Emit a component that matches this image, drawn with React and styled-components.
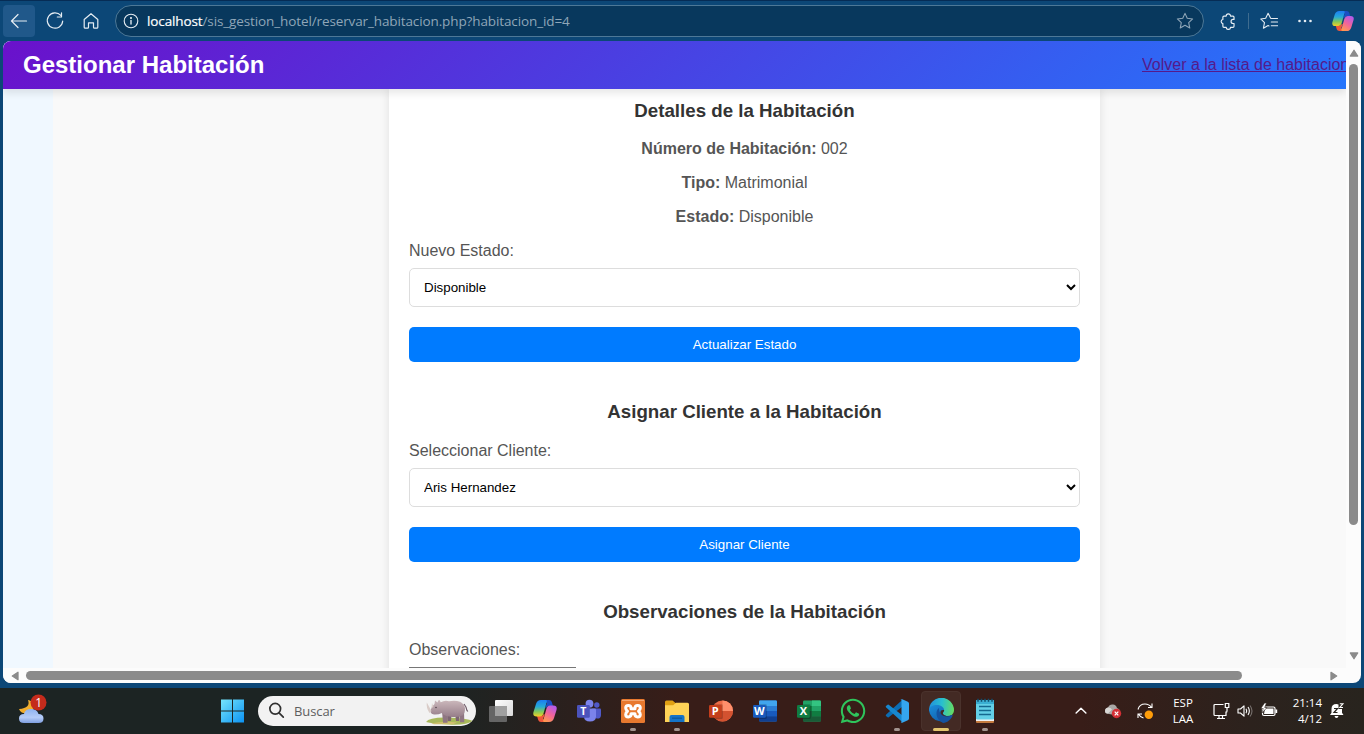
import React from "react";
import styled, { createGlobalStyle } from "styled-components";
import { FaWhatsapp } from "react-icons/fa";

const Global = createGlobalStyle`
  * { box-sizing: border-box; }
  html, body { margin: 0; padding: 0; overflow: hidden; }
  body { font-family: "Liberation Sans", Arial, sans-serif; }
`;

const Screen = styled.div`
  width: 1364px;
  height: 734px;
  display: flex;
  flex-direction: column;
  background: #0c4777;
  overflow: hidden;
`;

/* ---------- browser toolbar ---------- */
const Toolbar = styled.div`
  height: 41px;
  flex: none;
  display: flex;
  align-items: flex-start;
  padding: 4px 0 0 3px;
  border-top: 1px solid #062c55;
  color: #e6edf3;
  svg { display: block; flex: none; }
`;
const ToolButton = styled.div`
  width: ${(p) => p.$w || 32}px;
  height: 32px;
  margin-left: ${(p) => p.$before || 0}px;
  margin-right: ${(p) => p.$gap || 0}px;
  flex: none;
  display: flex;
  align-items: center;
  justify-content: center;
  border-radius: 4px;
  background: ${(p) => (p.$active ? "#20588a" : "transparent")};
`;
const AddressBar = styled.div`
  width: 1089px;
  height: 32px;
  flex: none;
  display: flex;
  align-items: center;
  padding: 0 9px 0 7px;
  border: 1px solid #4d7897;
  border-radius: 16px;
  background: #08385d;
`;
const Url = styled.div`
  flex: 1;
  margin-left: 8px;
  font: 13.5px/18px "Open Sans", "Noto Sans", sans-serif;
  letter-spacing: -0.115px;
  color: #8fa6b8;
  white-space: nowrap;
  b { font-weight: 400; color: #fff; -webkit-text-stroke: 0.2px #fff; }
`;
const Divider = styled.div`
  width: 1px;
  height: 16px;
  margin: 8px 4px 0;
  flex: none;
  background: #3f6c8f;
`;

/* ---------- page viewport ---------- */
const Viewport = styled.div`
  width: 1358px;
  height: 642px;
  flex: none;
  margin-left: 3px;
  display: grid;
  grid-template: 627px 15px / 1343px 15px;
  border-radius: 8px;
  overflow: hidden;
  background: #fcfcfc;
`;
const Page = styled.div`
  display: flex;
  flex-direction: column;
  overflow: hidden;
  background: #f0f8ff;
`;
const Header = styled.header`
  height: 48px;
  flex: none;
  display: flex;
  align-items: center;
  justify-content: space-between;
  padding-left: 20px;
  background: linear-gradient(135deg, #6a11cb, #2575fc);
  box-shadow: 0 4px 8px rgba(0, 0, 0, 0.1);
  z-index: 1;
`;
const Title = styled.h1`
  margin: 0;
  font-size: 24px;
  line-height: 28px;
  color: #fff;
`;
const BackLink = styled.a`
  width: 204px;
  overflow: hidden;
  white-space: nowrap;
  font-size: 16px;
  line-height: 20px;
  color: #551a8b;
  text-decoration: underline;
`;
const Main = styled.main`
  flex: 1;
  min-height: 0;
  margin-left: 50px;
  padding-left: 336px;
  background: #f9f9f9;
`;
const Panel = styled.section`
  width: 711px;
  height: 760px;
  padding: 11px 20px 0;
  background: #fff;
  box-shadow: 0 0 10px rgba(0, 0, 0, 0.1);
`;
const Heading = styled.h3`
  margin: 0 0 ${(p) => p.$gap || 18}px;
  font-size: 18.72px;
  line-height: 22px;
  text-align: center;
  color: #333;
`;
const Fact = styled.p`
  margin: 0 0 16px;
  font-size: 16px;
  line-height: 18px;
  text-align: center;
  color: #555;
`;
const Label = styled.label`
  display: block;
  margin: 0 0 8px;
  font-size: 16px;
  line-height: 18px;
  color: #555;
`;
const Select = styled.select`
  display: block;
  width: 100%;
  height: 39px;
  padding: 10px;
  border: 1px solid #ddd;
  border-radius: 5px;
  background: #fff;
  color: #000;
  font: 13.333px "Liberation Sans", Arial, sans-serif;
`;
const Submit = styled.button`
  display: block;
  width: 100%;
  height: 35px;
  margin: 20px 0 39px;
  padding: 10px;
  border: none;
  border-radius: 5px;
  background: #007bff;
  color: #fff;
  font: 13.333px/15px "Liberation Sans", Arial, sans-serif;
`;
const Notes = styled.textarea`
  display: block;
  width: 167px;
  height: 36px;
  border: 1px solid #767676;
  resize: none;
`;

/* ---------- scrollbars ---------- */
const VBar = styled.div`
  display: flex;
  flex-direction: column;
  align-items: center;
  padding: 7px 0 7px;
  background: #fcfcfc;
`;
const HBar = styled.div`
  display: flex;
  align-items: center;
  padding: 0 7px 0 7px;
  background: #fcfcfc;
`;
const Thumb = styled.div`
  width: ${(p) => p.$w}px;
  height: ${(p) => p.$h}px;
  margin: ${(p) => p.$m};
  flex: none;
  border-radius: 5px;
  background: #8b8b8b;
`;
const Arrow = styled.svg`
  width: 10px;
  height: 10px;
  flex: none;
  transform: rotate(${(p) => p.$turn}deg);
`;

/* ---------- taskbar ---------- */
const Taskbar = styled.div`
  height: 46px;
  flex: none;
  margin-top: 5px;
  display: flex;
  align-items: center;
  padding-bottom: 1px;
  background: linear-gradient(90deg, #1c2423 0, #1c2423 440px, #2b201d 570px, #381d18 680px, #381d18 1080px, #2c221d 1250px, #28241e 100%);
  svg { display: block; flex: none; }
`;
const Weather = styled.div`
  width: 210px;
  padding: 0 0 3px 17px;
`;
const Slot = styled.div`
  position: relative;
  width: 44px;
  height: 44px;
  flex: none;
  display: flex;
  align-items: center;
  justify-content: center;
`;
const ActiveTile = styled.div`
  width: 40px;
  height: 40px;
  display: flex;
  align-items: center;
  justify-content: center;
  border: 1px solid #4a322c;
  border-radius: 4px;
  background: #432a24;
`;
const Running = styled.div`
  position: absolute;
  bottom: 2px;
  left: 50%;
  width: ${(p) => (p.$active ? 16 : 6)}px;
  height: 3px;
  margin-left: ${(p) => (p.$active ? -8 : -3)}px;
  border-radius: 2px;
  background: ${(p) => (p.$active ? "#e3c56f" : "#a3948f")};
`;
const Search = styled.div`
  width: 218px;
  height: 30px;
  flex: none;
  margin: 0 3px 0 4px;
  display: flex;
  align-items: center;
  border-radius: 15px;
  padding: 0 1px 0 10px;
  background: #f2f2f2;
  overflow: hidden;
`;
const SearchText = styled.span`
  flex: 1;
  margin-left: 9px;
  font: 13px/18px "Open Sans", "Noto Sans", sans-serif;
  letter-spacing: -0.1px;
  color: #5e5e5e;
`;
const Tray = styled.div`
  flex: 1;
  display: flex;
  align-items: center;
  padding-left: 67px;
  color: #fff;
`;
const TrayItem = styled.div`
  width: ${(p) => p.$w}px;
  flex: none;
  display: flex;
  justify-content: center;
`;
const TrayText = styled.div`
  width: ${(p) => p.$w}px;
  flex: none;
  padding-top: 1px;
  text-align: ${(p) => p.$align || "center"};
  font: 11.5px/16px "Open Sans", "Noto Sans", sans-serif;
  color: #fff;
`;

const Line = ({ size = 20, w = 1.2, children, color = "currentColor" }) => (
  <svg width={size} height={size} viewBox="0 0 20 20" fill="none" stroke={color} strokeWidth={w} strokeLinecap="round" strokeLinejoin="round">{children}</svg>
);

const Copilot = ({ size, id }) => (
  <svg width={size} height={size} viewBox="0 0 24 24">
    <defs>
      <linearGradient id={id + "a"} x1="0" y1="0" x2="0" y2="1">
        <stop offset="0" stopColor="#1c7cf2" /><stop offset=".4" stopColor="#25a9d8" /><stop offset=".7" stopColor="#7fc75e" /><stop offset="1" stopColor="#f2cf26" />
      </linearGradient>
      <linearGradient id={id + "b"} x1=".7" y1="0" x2=".2" y2="1">
        <stop offset="0" stopColor="#b45be8" /><stop offset=".5" stopColor="#f2649a" /><stop offset="1" stopColor="#ff9a4d" />
      </linearGradient>
    </defs>
    <path d="M9 1h7q2.200 0 2.800 2l1.200 4h-4q-2 0-2.700 2l-1-.5L14 4z" fill="#1b4fc4" />
    <path d="M15 23H8q-2.200 0-2.800-2L4 17h4q2 0 2.700-2l1 .5L10 20z" fill="#f0563b" />
    <path d="M8 1h4.600q1.700 0 1.100 2L10.500 14.500Q9.600 17.400 6.800 17.400H3.600Q-.6 17.400.5 13L3 5Q4.200 1 8 1z" fill={`url(#${id}a)`} />
    <path d="M16 23h-4.600q-1.700 0-1.100-2l3.200-11.500q.9-2.900 3.700-2.900h3.200q4.200 0 3.100 4.400L21 19q-1.200 4-5 4z" fill={`url(#${id}b)`} />
  </svg>
);

const Office = ({ letter, tile, children }) => (
  <svg width="24" height="24" viewBox="0 0 24 24">
    {children}
    <path d="M6 5.200h6.500q1.300 0 1.300 1.300v12.300q0 1.200-1.300 1.200H6z" fill="#000" opacity=".22" />
    <rect x="0" y="6" width="12.800" height="12.800" rx="1.200" fill={tile} />
    <text x="6.300" y="16.400" textAnchor="middle" fontFamily="Open Sans, Noto Sans, sans-serif" fontWeight="700" fontSize="11" fill="#fff">{letter}</text>
  </svg>
);

const PowerPoint = () => (
  <Office letter="P" tile="#c43e1c">
    <circle cx="13.500" cy="12" r="10.500" fill="#ed6c47" />
    <path d="M13.500 1.500A10.500 10.500 0 0 1 24 12H13.500z" fill="#ff8f6b" />
    <path d="M3 12h21a10.500 10.500 0 0 1-21 0z" fill="#d35230" />
  </Office>
);
const Word = () => (
  <Office letter="W" tile="#185abd">
    <rect x="6" y="1.500" width="18" height="21" rx="1.200" fill="#2b7cd3" />
    <path d="M6 2.700Q6 1.500 7.200 1.500h15.600q1.200 0 1.200 1.200V7H6z" fill="#41a5ee" />
    <path d="M6 12h18v5.200H6z" fill="#185abd" />
    <path d="M6 17.200h18v4.100q0 1.200-1.200 1.200H7.200Q6 22.500 6 21.300z" fill="#103f91" />
  </Office>
);
const Excel = () => (
  <Office letter="X" tile="#107c41">
    <rect x="6" y="1.500" width="18" height="21" rx="1.200" fill="#21a366" />
    <path d="M15 1.500h7.800q1.200 0 1.200 1.200V7h-9z" fill="#33c481" />
    <path d="M6 12h9v10.500H7.200Q6 22.500 6 21.300z" fill="#185c37" />
    <path d="M15 12h9v5.200h-9zM6 7h9v5H6z" fill="#107c41" />
    <path d="M15 17.200h9v4.100q0 1.200-1.200 1.200H15z" fill="#185c37" />
  </Office>
);
const Teams = () => (
  <svg width="24" height="24" viewBox="0 0 24 24">
    <circle cx="19.800" cy="6" r="2.700" fill="#5059c9" />
    <path d="M15 9.500h8q1 0 1 1v5.400q0 3.600-3.700 3.600T16 16z" fill="#5059c9" />
    <circle cx="12.500" cy="4.700" r="3.900" fill="#7b83eb" />
    <path d="M7 9.500h10.800q1.200 0 1.200 1.200v6.500q0 5.300-6 5.300t-6-5.300z" fill="#7b83eb" />
    <rect y="6" width="12.800" height="12.800" rx="1.200" fill="#4b53bc" />
    <text x="6.400" y="16.200" textAnchor="middle" fontFamily="Open Sans, Noto Sans, sans-serif" fontWeight="700" fontSize="10.500" fill="#fff">T</text>
  </svg>
);
const Xampp = () => (
  <svg width="24" height="24" viewBox="0 0 24 24">
    <rect width="24" height="24" rx="1.500" fill="#e8792f" />
    <path d="M1 1.500h22" stroke="#f3a772" strokeWidth="1" />
    <path d="M7.300 6.500q2.700 0 2.700 2.300v.9h4v-.9q0-2.300 2.700-2.300 2.600 0 2.600 2.500 0 1.800-1.800 3.200 1.800 1.400 1.800 3.200 0 2.500-2.600 2.500-2.700 0-2.700-2.300v-.9h-4v.9q0 2.300-2.700 2.300-2.600 0-2.600-2.500 0-1.800 1.800-3.200-1.800-1.400-1.800-3.200 0-2.500 2.600-2.500z" fill="none" stroke="#fff" strokeWidth="3" strokeLinejoin="round" />
  </svg>
);
const Folder = () => (
  <svg width="24" height="24" viewBox="0 0 24 24">
    <path d="M0 3q0-1.500 1.500-1.500h6L10.500 4H22q1.500 0 1.500 1.500V14H0z" fill="#e0a013" />
    <path d="M0 6.200h8.200L11 3.700h11.500Q24 3.700 24 5.200V23H0z" fill="#ffd357" />
    <path d="M4.500 23v-5q0-2 2-2h11q2 0 2 2v5z" fill="#1473c8" />
    <path d="M7 18.500h10v1.400H7z" fill="#0c5a9f" />
  </svg>
);
const VsCode = () => (
  <svg width="24" height="24" viewBox="0 0 24 24">
    <path d="M1.200 15.500L17.200 1v6.800L3.700 18.200q-.6.400-1.100 0L1 17q-.7-.8.200-1.500z" fill="#0c6db4" />
    <path d="M1.200 8.500L17.200 23v-6.800L3.700 5.800q-.6-.4-1.100 0L1 7q-.7.800.2 1.500z" fill="#1787cf" />
    <path d="M17.300.3l5.500 2.500q1.200.5 1.200 1.800v14.800q0 1.300-1.200 1.800l-5.500 2.500q-1 .4-1.700-.4.900.4.900-.8V1.500q0-1.200-.9-.8.700-.8 1.700-.4z" fill="#35a5ee" />
  </svg>
);
const Edge = () => (
  <svg width="25" height="25" viewBox="0 0 24 24">
    <defs>
      <linearGradient id="edgeTop" x1="0" y1=".4" x2="1" y2=".5">
        <stop offset="0" stopColor="#2290dc" /><stop offset=".5" stopColor="#28bfd0" /><stop offset="1" stopColor="#65dc62" />
      </linearGradient>
      <linearGradient id="edgeLow" x1="0" y1="0" x2=".8" y2="1">
        <stop offset="0" stopColor="#1b8edb" /><stop offset="1" stopColor="#115aa8" />
      </linearGradient>
    </defs>
    <path d="M0 12A12 12 0 0 1 24 11.500c0 3.500-2.500 6-5.800 6-2.700 0-4.900-1.200-4.900-2.800L8 12z" fill="url(#edgeTop)" />
    <path d="M0 12C.2 8.300 3.700 6.700 7.500 6.700c4.500 0 7 2.500 7 5 0 1.500-1.200 2-1.200 3 0 1.500 2.200 2.800 4.800 2.800 2 0 3.200-.6 4.200-1.100A12 12 0 0 1 0 12z" fill="url(#edgeLow)" />
    <path d="M9.600 9.700C5.500 12 6.500 21.500 13.500 23.900c4.200-.2 7.200-2.800 9-6.600.5-1-.3-1.200-.9-.9-5.600 2.500-12.600-.2-12-6.700z" fill="#1553a0" />
    <path d="M14.500 11.500c.3 1.600-1.200 2-1.200 3.200 0 1.600 2.200 2.800 4.900 2.800 1.500 0 2.500-.4 3.400-1-3 2.400-8.600 1.500-10.600-1.800q-.5-3.800 3.500-3.200z" fill="#432a24" />
  </svg>
);
const Notepad = () => (
  <svg width="22" height="26" viewBox="0 0 22 26">
    <rect x="2" y="20" width="18" height="5" rx="1" fill="#c47a3e" />
    <path d="M2 20h18v3H2z" fill="#f2f2f2" />
    <rect x="2" y="2" width="18" height="19.500" rx="1.300" fill="#63cfe7" />
    <path d="M2 3.300Q2 2 3.300 2h15.400Q20 2 20 3.300V6H2z" fill="#3aaed2" />
    <path d="M5 8.500h12M5 12.500h12M5 16.500h12" stroke="#14678f" strokeWidth="1.700" />
    <path d="M4 .8v3M7.500.8v3M11 .8v3M14.500.8v3M18 .8v3" stroke="#124d6c" strokeWidth="1.500" />
  </svg>
);
const Rhino = () => (
  <svg width="50" height="30" viewBox="0 0 50 30">
    <defs><linearGradient id="hide" x1="0" y1="0" x2="0" y2="1"><stop offset="0" stopColor="#cdbabd" /><stop offset="1" stopColor="#967d89" /></linearGradient></defs>
    <path d="M1 26q3-5 22-4.500t25 3.500q-7 4.500-24 3.500T1 26z" fill="#a9b95b" />
    <path d="M6 27.500q12-3 26-1l-4 1.800H9z" fill="#d0c16f" />
    <path d="M22 18h4.500l-.5 7h-3zM30 17h4v8h-3z" fill="#7d6672" />
    <path d="M17 15h6.500l-1 11.800h-4.500zM33.500 15h5.500l.3 11.300h-4.300z" fill="#8f7682" />
    <path d="M5.500 14.500Q7 10 9.500 8l.5-3.500 2.500 2q.5-3 2-2.500l1.200 2.300Q20 3.800 24 5.300q6-1.500 11 .5 4.500 2 5 7.200 0 4.500-2.500 6.500-7 2.500-13 1-5-.2-7.500-3.500-4 1.800-8 1.500-3.800-.5-3.500-4z" fill="url(#hide)" />
    <path d="M6.500 15L1.800 6.500Q1 12 4.500 17zM8.500 11L7 7 6.500 12z" fill="#dacdc9" />
    <path d="M39 8q2.800 3.500 2.800 6l1 1.500" stroke="#6e5966" strokeWidth="1.200" fill="none" />
    <circle cx="11" cy="11.500" r=".7" fill="#403139" />
  </svg>
);

const TriArrow = ({ turn }) => (
  <Arrow $turn={turn} viewBox="0 0 10 10"><path d="M5 2.300L8.700 8H1.300z" fill="#8b8b8b" stroke="#8b8b8b" strokeWidth="1.300" strokeLinejoin="round" /></Arrow>
);

const starPath = "M10 1.500l2.500 5.500 6 .7-4.400 4.100 1.200 6-5.300-3-5.300 3 1.200-6L1.500 7.700l6-.7z";

function BrowserToolbar() {
  return (
    <Toolbar>
      <ToolButton $active $gap={4}><Line><path d="M17.500 10H2.500M9 3.500L2.500 10 9 16.500" /></Line></ToolButton>
      <ToolButton $gap={4}><Line><path d="M15.800 4.400A7.700 7.700 0 1 0 17.700 10M16.500 1.800v4.200h-4.200" /></Line></ToolButton>
      <ToolButton $gap={8}><Line><path d="M3.200 8.500L10 2.700l6.800 5.800v7.700q0 1-1 1h-2.300q-1 0-1-1v-4.400h-5v4.400q0 1-1 1H4.200q-1 0-1-1z" /></Line></ToolButton>
      <AddressBar>
        <Line size={16} w={1.4}><circle cx="10" cy="10" r="8.500" /><path d="M10 9.300v4.500" strokeWidth="1.700" /><circle cx="10" cy="6.200" r=".6" fill="currentColor" /></Line>
        <Url><b>localhost</b>/sis_gestion_hotel/reservar_habitacion.php?habitacion_id=4</Url>
        <Line size={18} color="#8fa6b8"><path d={starPath} /></Line>
      </AddressBar>
      <ToolButton $before={8}>
        <Line size={18} w={1.3}><path d="M5.500 4.500H8a2.400 2.400 0 0 1 4.800 0h2.700q1.200 0 1.200 1.200v2.500h-1a1.900 1.900 0 0 0 0 4.600h1v3q0 1.200-1.200 1.200h-2.700a2.400 2.400 0 0 1-4.800 0H5.500q-1.200 0-1.200-1.200v-2.900a2.400 2.400 0 0 1 0-4.700V5.700q0-1.200 1.200-1.200z" /></Line>
      </ToolButton>
      <Divider />
      <ToolButton $gap={4}>
        <Line size={18}><path d="M11.800 7L9 1.500 6.300 7l-5.500.7L5 11.800 3.800 18 9 15l1 .6M12.500 7.200h7M12.500 11.200h7M12.500 15.200h7" /></Line>
      </ToolButton>
      <ToolButton $gap={6}>
        <svg width="16" height="16" viewBox="0 0 16 16" fill="currentColor"><circle cx="2.500" cy="8" r="1.300" /><circle cx="8" cy="8" r="1.300" /><circle cx="13.500" cy="8" r="1.300" /></svg>
      </ToolButton>
      <ToolButton><Copilot size={22} id="tool" /></ToolButton>
    </Toolbar>
  );
}

function RoomPage() {
  return (
    <Page>
      <Header>
        <Title>Gestionar Habitación</Title>
        <BackLink>Volver a la lista de habitaciones</BackLink>
      </Header>
      <Main>
        <Panel>
          <Heading>Detalles de la Habitación</Heading>
          <Fact><b>Número de Habitación:</b> 002</Fact>
          <Fact><b>Tipo:</b> Matrimonial</Fact>
          <Fact><b>Estado:</b> Disponible</Fact>
          <Label>Nuevo Estado:</Label>
          <Select defaultValue="Disponible"><option>Disponible</option></Select>
          <Submit>Actualizar Estado</Submit>
          <Heading $gap={19}>Asignar Cliente a la Habitación</Heading>
          <Label>Seleccionar Cliente:</Label>
          <Select defaultValue="Aris Hernandez"><option>Aris Hernandez</option></Select>
          <Submit>Asignar Cliente</Submit>
          <Heading>Observaciones de la Habitación</Heading>
          <Label>Observaciones:</Label>
          <Notes />
        </Panel>
      </Main>
    </Page>
  );
}

const TaskApp = ({ children, running }) => <Slot>{children}{running && <Running />}</Slot>;

function WindowsTaskbar() {
  return (
    <Taskbar>
      <Weather>
        <svg width="32" height="32" viewBox="0 0 32 32">
          <defs><linearGradient id="cloud" x1="0" y1="0" x2="0" y2="1"><stop offset="0" stopColor="#8fb2ef" /><stop offset=".6" stopColor="#b5ccf8" /><stop offset="1" stopColor="#7f9fe0" /></linearGradient></defs>
          <path d="M11 7q3 8-9 9 1.500 4.500 8 4.500 8-1 6-10-1-3-5-3.500z" fill="#f0ad2e" />
          <path d="M7 30q-5 0-5-4.500T7 21q1-5 7-5t7.500 5q5 0 5 4.500T21.500 30z" fill="url(#cloud)" />
          <circle cx="21.500" cy="9.500" r="8" fill="#c42b1c" />
          <text x="21.700" y="13.800" textAnchor="middle" fontFamily="Open Sans, sans-serif" fontSize="12" fill="#fff">1</text>
        </svg>
      </Weather>
      <Slot>
        <svg width="24" height="24" viewBox="0 0 24 24">
          <defs><linearGradient id="win" gradientUnits="userSpaceOnUse" x1="0" y1="0" x2="24" y2="24"><stop offset="0" stopColor="#7ae8fb" /><stop offset="1" stopColor="#0a92f3" /></linearGradient></defs>
          <path d="M1 .5h11v11H1zM13 .5h11v11H13zM1 12.500h11v11H1zM13 12.500h11v11H13z" fill="url(#win)" />
        </svg>
      </Slot>
      <Search>
        <Line size={17} w={2} color="#303030"><circle cx="8.500" cy="8" r="6.300" /><path d="M13 12.800l5 5" /></Line>
        <SearchText>Buscar</SearchText>
        <Rhino />
      </Search>
      <TaskApp>
        <svg width="24" height="24" viewBox="0 0 24 24"><defs><linearGradient id="tv" x1="0" y1="0" x2="1" y2="1"><stop offset="0" stopColor="#fff" /><stop offset="1" stopColor="#d9d9d9" /></linearGradient></defs><rect x="6" y="1" width="18" height="16" rx="1" fill="url(#tv)" /><rect x="0" y="7" width="18" height="16" rx="1" fill="#656565" /><path d="M6 7h12v10H6z" fill="#a0a0a0" /></svg>
      </TaskApp>
      <TaskApp><Copilot size={24} id="task" /></TaskApp>
      <TaskApp><Teams /></TaskApp>
      <TaskApp running><Xampp /></TaskApp>
      <TaskApp running><Folder /></TaskApp>
      <TaskApp><PowerPoint /></TaskApp>
      <TaskApp><Word /></TaskApp>
      <TaskApp><Excel /></TaskApp>
      <TaskApp><FaWhatsapp size={28} color="#2fc45c" /></TaskApp>
      <TaskApp running><VsCode /></TaskApp>
      <Slot><ActiveTile><Edge /></ActiveTile><Running $active /></Slot>
      <TaskApp running><Notepad /></TaskApp>
      <Tray>
        <TrayItem $w={14}><Line size={14} w={2}><path d="M3 13l7-7 7 7" /></Line></TrayItem>
        <TrayItem $w={50}>
          <svg width="18" height="16" viewBox="0 0 18 16"><path d="M5 11q-4 0-4-3 0-3 3-3.500Q5.500 1 9 1.500q3 0 4 3.500 3 1 3 4l-5 3z" fill="#aaa7a5" /><path d="M1 8q0-3 3-3.500 3 0 4 2l-4 4q-3 0-3-2.500z" fill="#d8d6d4" /><circle cx="12.500" cy="10.500" r="4.700" fill="#d42f35" /><path d="M10.700 8.700l3.600 3.600M14.300 8.700l-3.600 3.600" stroke="#fff" strokeWidth="1.200" /></svg>
        </TrayItem>
        <TrayItem $w={14}>
          <svg width="18" height="18" viewBox="0 0 18 18"><path d="M2 7.500Q3.500 2 9 2q4 0 6.500 3.500M16 1.500v4h-4M7.500 16Q4 15 2.500 12M2 16v-4h4" fill="none" stroke="#fff" strokeWidth="1.100" /><circle cx="12.800" cy="12.800" r="4.200" fill="#ff9d0a" /></svg>
        </TrayItem>
        <TrayText $w={62}>ESP<br />LAA</TrayText>
        <TrayItem $w={14}>
          <svg width="17" height="18" viewBox="0 0 17 18" fill="none" stroke="#fff" strokeWidth="1.200"><path d="M10.500 2.500H2q-1 0-1 1v9q0 1 1 1h11V9.500M4 16.500h8M6 13.500v3M9.500 13.500v3M12.300 1.500h3.500v4h-3.500zM14 5.500V9q0 1.500-1 1.500" /></svg>
        </TrayItem>
        <TrayItem $w={34}>
          <svg width="16" height="16" viewBox="0 0 16 16" fill="none" stroke="#fff" strokeWidth="1.100" strokeLinejoin="round"><path d="M1 6h2.500L7 2.800v10.400L3.500 10H1zM9 5.800q1.500 2.200 0 4.400M11 4q2.700 4 0 8" /><path d="M13 2.500q4 5.500 0 11" opacity=".35" /></svg>
        </TrayItem>
        <TrayItem $w={14}>
          <svg width="18" height="16" viewBox="0 0 18 16"><rect x="2.500" y="4" width="12.500" height="8.500" rx="1.500" fill="none" stroke="#fff" strokeWidth="1.200" /><path d="M5 5.500h8.500v5.600H4z M15.500 6.500h1.700v3.500h-1.700z" fill="#fff" /><path d="M4.500 0L.8 5.500h2.400L2 10l5-5.500H4.700L6.500 0z" fill="#fff" stroke="#2c221d" strokeWidth=".6" /></svg>
        </TrayItem>
        <TrayText $w={46} $align="right">21:14<br />4/12</TrayText>
        <TrayItem $w={30}>
          <svg width="16" height="18" viewBox="0 0 16 18"><path d="M1 13l1.500-2.200V7q0-5 5-5 1 0 2 .4V7H13v3.800l1.500 2.200zM5.500 14h4q-.4 2-2 2t-2-2z" fill="#fff" /><path d="M10.800 1.700h3.200L10.800 5.500H14" fill="none" stroke="#fff" strokeWidth="1.100" /><path d="M5 6.500h3.500l-3.500 4h3.500" fill="none" stroke="#28241e" strokeWidth="1.200" /></svg>
        </TrayItem>
      </Tray>
    </Taskbar>
  );
}

export default function App() {
  return (
    <Screen>
      <Global />
      <BrowserToolbar />
      <Viewport>
        <RoomPage />
        <VBar>
          <TriArrow turn={0} />
          <Thumb $w={9} $h={461} $m="6px 0 126px" />
          <TriArrow turn={180} />
        </VBar>
        <HBar>
          <TriArrow turn={-90} />
          <Thumb $w={1216} $h={9} $m="0 87px 0 6px" />
          <TriArrow turn={90} />
        </HBar>
      </Viewport>
      <WindowsTaskbar />
    </Screen>
  );
}
